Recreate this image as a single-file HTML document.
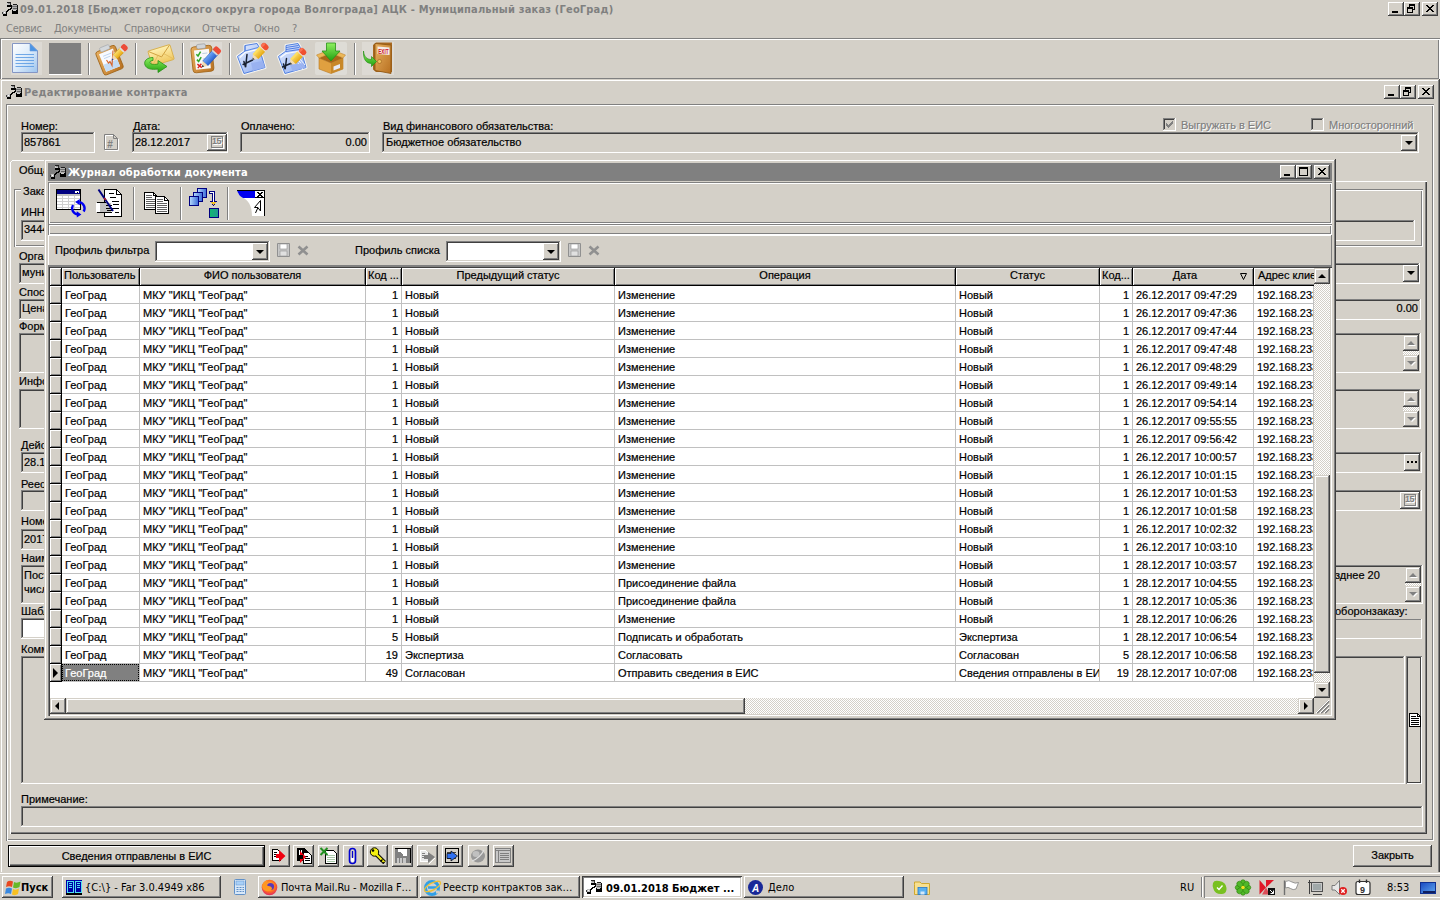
<!DOCTYPE html>
<html lang="ru"><head><meta charset="utf-8"><title>АЦК - Муниципальный заказ</title>
<style>
html,body{margin:0;padding:0}
body{width:1440px;height:900px;background:#D4D0C8;position:relative;overflow:hidden;font:11px "Liberation Sans",sans-serif;color:#000;line-height:13px;-webkit-text-stroke:.2px currentColor}
div,span,svg,i,b{position:absolute;box-sizing:border-box;white-space:nowrap}
b{font-weight:normal}
.t{font:bold 11px "DejaVu Sans Condensed","DejaVu Sans","Liberation Sans",sans-serif;color:#808080;line-height:13px}
.m{color:#808080;top:22px;font:11px "DejaVu Sans Condensed","DejaVu Sans","Liberation Sans",sans-serif;letter-spacing:-.2px;line-height:14px}
.raised{box-shadow:inset -1px -1px 0 #404040,inset 1px 1px 0 #fff,inset -2px -2px 0 #808080,inset 2px 2px 0 #D4D0C8;background:#D4D0C8}
.sunken{box-shadow:inset -1px -1px 0 #fff,inset 1px 1px 0 #808080,inset -2px -2px 0 #D4D0C8,inset 2px 2px 0 #404040}
.bev{box-shadow:inset -1px -1px 0 #fff,inset 1px 1px 0 #808080,inset -2px -2px 0 #808080,inset 2px 2px 0 #fff}
.groove{box-shadow:inset 1px 1px 0 #808080,inset -1px -1px 0 #fff,inset 2px 2px 0 #fff,inset -2px -2px 0 #808080}
.low1{box-shadow:inset -1px -1px 0 #fff,inset 1px 1px 0 #808080}
.hi1{box-shadow:inset -1px -1px 0 #808080,inset 1px 1px 0 #fff}
.win{box-shadow:inset -1px -1px 0 #404040,inset 1px 1px 0 #D4D0C8,inset -2px -2px 0 #808080,inset 2px 2px 0 #fff;background:#D4D0C8}
.wb{width:16px;height:14px}
.vs{width:2px;box-shadow:inset 1px 0 0 #808080,inset -1px 0 0 #fff}
.dis{color:#808080;text-shadow:1px 1px 0 #fff}
.t,.m,.tb,.cal,svg text{-webkit-text-stroke:0}
.sb{box-shadow:inset -1px -1px 0 #404040,inset 1px 1px 0 #D4D0C8,inset -2px -2px 0 #808080,inset 2px 2px 0 #fff}
.au,.ad,.al,.ar{width:0;height:0;border:4px solid transparent}
.au{left:4px;top:2px;border-bottom-color:#000;border-top-width:0;margin-top:4px}
.ad{left:4px;top:6px;border-top-color:#000;border-bottom-width:0}
.al{left:1px;top:4px;border-right-color:#000;border-left-width:0;margin-left:4px}
.ar{left:6px;top:4px;border-left-color:#000;border-right-width:0}
.au.dg{border-bottom-color:#808080;filter:drop-shadow(1px 1px 0 #fff)}
.ad.dg{border-top-color:#808080;filter:drop-shadow(1px 1px 0 #fff)}
.cal{left:4px;top:2px;width:12px;height:12px;font:bold 9px "Liberation Sans",sans-serif;line-height:11px;text-align:left;padding-left:1px;color:#808080;text-shadow:1px 1px 0 #fff;letter-spacing:-.6px;overflow:hidden;box-shadow:inset 1px 1px 0 #808080,inset -1px -1px 0 #808080,1px 1px 0 #fff}
/* grid */
.c{height:17px;line-height:18px;padding:0 3px;overflow:hidden;background:#fff}
.c.r{text-align:right}
.c.sel{background:#808080;color:#fff;outline:1px dotted #000;outline-offset:-1px}
.ind{left:50px;width:11px;height:17px;background:#D4D0C8;box-shadow:inset 1px 1px 0 #fff,inset -1px -1px 0 #808080}
.ind i{left:3px;top:4px;border-left:5px solid #000;border-top:5px solid transparent;border-bottom:5px solid transparent;width:0;height:0}
.h{top:268px;height:17px;line-height:15px;text-align:center;overflow:hidden;background:#D4D0C8;box-shadow:inset 1px 1px 0 #fff,inset -1px -1px 0 #808080}
.chk{background:repeating-conic-gradient(#fff 0 25%,#D4D0C8 0 50%) 0 0/2px 2px}
</style></head><body>

<!-- main title bar -->
<div class="t" style="left:20px;top:3px;letter-spacing:.18px">09.01.2018 [Бюджет городского округа города Волгограда] АЦК - Муниципальный заказ (ГеоГрад)</div>
<svg width="0" height="0" style="left:0;top:0"><defs>
<symbol id="app" viewBox="0 0 20 18">
<g shape-rendering="crispEdges">
<rect x="7" y="2" width="4" height="1" fill="#202020"/><rect x="7" y="3" width="4" height="2" fill="#C8C8C8"/><rect x="8" y="3" width="2" height="1" fill="#909090"/><rect x="7" y="5" width="5" height="2" fill="#000"/><rect x="10" y="3" width="1" height="2" fill="#303030"/>
<rect x="13" y="4" width="4" height="1" fill="#202020"/><rect x="12" y="5" width="6" height="5" fill="#B0B0B0"/><rect x="12" y="6" width="5" height="1" fill="#707070"/><rect x="13" y="8" width="4" height="1" fill="#606060"/><rect x="17" y="5" width="1" height="9" fill="#101010"/>
<rect x="12" y="10" width="6" height="4" fill="#000"/><rect x="13" y="10" width="3" height="1" fill="#D0D0D0"/>
<rect x="11" y="6" width="1" height="2" fill="#000"/>
<rect x="10" y="8" width="2" height="1" fill="#000"/><rect x="8" y="9" width="3" height="1" fill="#000"/><rect x="7" y="10" width="2" height="1" fill="#000"/><rect x="6" y="11" width="2" height="1" fill="#000"/>
<rect x="3" y="11" width="3" height="3" fill="#C0C0C0"/><rect x="2" y="12" width="1" height="2" fill="#404040"/><rect x="4" y="12" width="1" height="1" fill="#fff"/><rect x="6" y="12" width="1" height="3" fill="#000"/><rect x="3" y="14" width="4" height="2" fill="#000"/>
</g>
</symbol>
</defs></svg>
<svg style="left:0;top:0" width="20" height="18"><use href="#app"/></svg>

<div class="raised wb" style="left:1388px;top:2px"><svg width="16" height="14" shape-rendering="crispEdges"><rect x="4" y="9" width="6" height="2"/></svg></div>
<div class="raised wb" style="left:1404px;top:2px"><svg width="16" height="14" shape-rendering="crispEdges"><path d="M5 2h6v2h-6zM5 4h1v1h-1zM10 4h1v4h-1zM9 7h1v1h-1zM3 5h6v2h-6zM3 7h1v4h-1zM8 7h1v4h-1zM3 10h6v1h-6z"/></svg></div>
<div class="raised wb" style="left:1422px;top:2px"><svg width="16" height="14" shape-rendering="crispEdges"><path d="M4 3h2v1h-2zM10 3h2v1h-2zM5 4h2v1h-2zM9 4h2v1h-2zM6 5h4v1h-4zM7 6h2v1h-2zM6 7h4v1h-4zM5 8h2v1h-2zM9 8h2v1h-2zM4 9h2v1h-2zM10 9h2v1h-2z"/></svg></div>

<!-- menu -->
<div class="m" style="left:6px">Сервис</div>
<div class="m" style="left:54px">Документы</div>
<div class="m" style="left:124px">Справочники</div>
<div class="m" style="left:202px">Отчеты</div>
<div class="m" style="left:254px">Окно</div>
<div class="m" style="left:292px">?</div>

<!-- toolbar -->
<div class="groove" style="left:0;top:38px;width:1440px;height:42px"></div>
<svg style="left:0;top:40px" width="400" height="38" viewBox="0 40 400 38">
<defs>
<linearGradient id="gPage" x1="0" y1="0" x2="1" y2="1"><stop offset="0" stop-color="#fff"/><stop offset=".5" stop-color="#DCEBFA"/><stop offset="1" stop-color="#9CC4EE"/></linearGradient>
<linearGradient id="gPencilY" x1="0" y1="0" x2="0" y2="1"><stop offset="0" stop-color="#FBE070"/><stop offset="1" stop-color="#E8A810"/></linearGradient>
<linearGradient id="gPencilB" x1="0" y1="0" x2="0" y2="1"><stop offset="0" stop-color="#70A8F8"/><stop offset="1" stop-color="#2860D0"/></linearGradient>
<linearGradient id="gGreen" x1="0" y1="0" x2="0" y2="1"><stop offset="0" stop-color="#90F060"/><stop offset="1" stop-color="#20A010"/></linearGradient>
<linearGradient id="gBrown" x1="0" y1="0" x2="1" y2="1"><stop offset="0" stop-color="#E8B060"/><stop offset="1" stop-color="#B87020"/></linearGradient>
<linearGradient id="gEnv" x1="0" y1="0" x2="0" y2="1"><stop offset="0" stop-color="#FFF0B0"/><stop offset="1" stop-color="#F0C860"/></linearGradient>
<linearGradient id="gBluePaper" x1="0" y1="0" x2="1" y2="1"><stop offset="0" stop-color="#E8F0FF"/><stop offset="1" stop-color="#88A8F0"/></linearGradient>
</defs>
<!-- separators -->
<g shape-rendering="crispEdges">
<path d="M88.5 43V75M135.5 43V75M182.5 43V75M229.5 43V75M354.5 43V75" stroke="#808080"/>
<path d="M89.5 43V75M136.5 43V75M183.5 43V75M230.5 43V75M355.5 43V75" stroke="#fff"/>
</g>
<!-- 1 new doc -->
<g transform="translate(10,42)">
<rect x="1" y="0" width="31" height="33" fill="#DDDAD4"/>
<path d="M2.5 1.5H20L27.5 9V30.5H2.5Z" fill="url(#gPage)" stroke="#8496C4"/>
<path d="M20 1.5V9H27.5Z" fill="#4A94E4" stroke="#6C9CDC" stroke-width=".6"/>
<path d="M5.5 12.5H24M5.5 15.5H24M5.5 18.5H24M5.5 21.5H24M5.5 24.5H24" stroke="#5C9CE4" stroke-width="1" opacity=".85"/>
</g>
<!-- 2 gray -->
<rect x="49" y="43" width="32" height="31" fill="#808080"/><rect x="49" y="74" width="33" height="1" fill="#fff"/>
<!-- 3 clipboard + pencil -->
<g transform="translate(96,42)">
<g transform="rotate(-22 14 18)">
<rect x="3" y="5.500" width="21" height="25" rx="2.500" fill="url(#gBrown)" stroke="#A06418" stroke-width=".8"/>
<rect x="6" y="8.500" width="15" height="19" fill="#F8FAFF"/>
<rect x="6" y="20" width="15" height="7.500" fill="#C4DCF4"/>
<rect x="8.500" y="3" width="10" height="4.500" rx="1.200" fill="#D4D8DC" stroke="#A0A4A8" stroke-width=".6"/>
<path d="M9 12H18M9 14.500H16" stroke="#B8D0EC" stroke-width=".8"/>
</g>
<path d="M10.500 18L12.500 21L14 19.500L16 23.500L17 8.500" fill="none" stroke="#D86830" stroke-width="1.200"/>
<g transform="translate(2,-2) rotate(-45 22 12)">
<rect x="15" y="9" width="10" height="6" fill="url(#gPencilY)" stroke="#C08808" stroke-width=".5"/>
<path d="M15 9L10.500 12L15 15Z" fill="#F0D8B0"/><path d="M12 11L10 12L12 13Z" fill="#2840A0"/>
<rect x="25" y="8.600" width="6" height="6.800" rx="2.400" fill="#EC4C38"/>
<rect x="24" y="9" width="1.600" height="6" fill="#E0E0E0"/>
</g>
</g>
<!-- 4 envelope + green arrow -->
<g transform="translate(143,42)">
<g transform="rotate(-17 18 13)">
<rect x="6.5" y="5.500" width="23" height="15.500" rx="1" fill="url(#gEnv)" stroke="#D8B050" stroke-width=".9"/>
<path d="M7 6L18 15L29 6" fill="none" stroke="#D0A040" stroke-width=".9"/>
<path d="M7 20.500L15 12.500M29 20.500L21 12.500" stroke="#E0B858" stroke-width=".7"/>
</g>
<path d="M10 15.500C4 15.500 0.500 19 2 23C3.500 27 9 28 15 27V30.500L24 24.500L15 18.500V22C10 23 7 22 7 20.500C7 19 8.500 18.500 10 18.500Z" fill="url(#gGreen)" stroke="#289018" stroke-width=".8"/>
</g>
<!-- 5 clipboard checklist + blue pencil -->
<g transform="translate(190,42)">
<rect x="0" y="0" width="32" height="33" fill="#DDDAD4"/>
<g transform="rotate(-6 13 18)">
<rect x="2" y="4" width="21" height="26" rx="3" fill="url(#gBrown)" stroke="#A06418" stroke-width=".8"/>
<rect x="5" y="7.500" width="15" height="19.500" fill="#F8F8F8"/>
<rect x="8" y="2" width="9" height="4.500" rx="1.500" fill="#D0D4D8" stroke="#909498" stroke-width=".6"/>
<path d="M7 11.500L8.500 13.500L11.500 9.500M7 17L8.500 19L11.500 15" fill="none" stroke="#30A828" stroke-width="1.500"/>
<path d="M7 21.500L11 25.500M11 21.500L7 25.500" stroke="#D82020" stroke-width="1.400"/>
<path d="M13 11.500H18M13 17H18" stroke="#B0C4DC" stroke-width=".8"/>
</g>
<g transform="rotate(-48 22 14)">
<rect x="12" y="10.500" width="15" height="7" fill="url(#gPencilB)" stroke="#2050B0" stroke-width=".5"/>
<path d="M12 10.500L7 14L12 17.500Z" fill="#F0D8B0"/><path d="M9 12.800L7 14L9 15.200Z" fill="#303030"/>
<rect x="26.500" y="10" width="6" height="8" rx="2.200" fill="#EC4C38"/>
<rect x="25.500" y="10.500" width="1.600" height="7" fill="#D8D8D8"/>
</g>
</g>
<!-- 6 blue paper + pencil -->
<g transform="translate(237,42)">
<path d="M8 3.500L20 1.500L22 5L28 25.500L7 31.500L0.500 14.500L8 9Z" fill="none" stroke="#fff" stroke-width="3" opacity=".75" stroke-linejoin="round"/>
<path d="M8 3.500L20 1.500L22 5L28 25.500L7 31.500L0.500 14.500L8 9Z" fill="url(#gBluePaper)" stroke="#5080E0" stroke-width="1" stroke-linejoin="round"/>
<path d="M8 9L21 5.500M8 3.500V9" fill="none" stroke="#5080E0" stroke-width=".9"/>
<path d="M14 21L26 19L28 25.500L16 29Z" fill="#98B0F0" opacity=".9"/>
<path d="M3 15.500L8 10.500L20.500 7.500" fill="none" stroke="#fff" stroke-width="1.200" opacity=".9"/>
<path d="M10 12.500L8.600 25.200L6.900 19.500M6.100 22.500L15.600 18" fill="none" stroke="#182030" stroke-width="1.500" stroke-linecap="round"/>
<g transform="translate(15.5,17.8) rotate(-47)">
<path d="M0 0L4.500 -3.800V3.800Z" fill="#F4DCB0"/><path d="M0 0L1.800 -1.500V1.500Z" fill="#303848"/>
<rect x="4.500" y="-3.800" width="10" height="7.600" fill="url(#gPencilY)"/>
<rect x="4.500" y="-3.800" width="10" height="2.200" fill="#FFE060" opacity=".7"/>
<rect x="14.500" y="-3.800" width="1.300" height="7.600" fill="#F0E0D0"/>
<rect x="15.500" y="-4" width="5.500" height="8" rx="2.600" fill="#F05030"/>
<rect x="16" y="-3.600" width="4.500" height="2.500" rx="1.200" fill="#FF8060" opacity=".7"/>
</g>
</g>
<!-- 7 blue papers stack + pencil -->
<g transform="translate(276,42)">
<path d="M10 3.500L22 1.500L24 5L30 25.500L9 31.500L2.500 14.500L10 9Z" fill="none" stroke="#fff" stroke-width="3" opacity=".75" stroke-linejoin="round"/>
<path d="M10 3.500L22 1.500L24 5L30 25.500L9 31.500L2.500 14.500L10 9Z" fill="url(#gBluePaper)" stroke="#5080E0" stroke-width="1" stroke-linejoin="round"/>
<path d="M10 5.500L22.500 3.500M10 7.500L23 5.500M10 9.500L23.500 7.500" fill="none" stroke="#4070E0" stroke-width=".9"/>
<path d="M24 17L29 23M23 19L28 25M22 21L27 27" fill="none" stroke="#fff" stroke-width="1" opacity=".9"/>
<path d="M14 23L27 21L30 25.500L17 29.500Z" fill="#98B0F0" opacity=".9"/>
<path d="M4.500 15.500L10 11.500L22 9.500" fill="none" stroke="#fff" stroke-width="1.200" opacity=".9"/>
<path d="M10.500 16.500L9.200 27.200L7.500 22M6.500 25L14.500 21.500" fill="none" stroke="#182030" stroke-width="1.500" stroke-linecap="round"/>
<g transform="translate(14,22.6) rotate(-46)">
<path d="M0 0L4.500 -3.800V3.800Z" fill="#F4DCB0"/><path d="M0 0L1.800 -1.500V1.500Z" fill="#303848"/>
<rect x="4.500" y="-3.800" width="10" height="7.600" fill="url(#gPencilY)"/>
<rect x="4.500" y="-3.800" width="10" height="2.200" fill="#FFE060" opacity=".7"/>
<rect x="14.500" y="-3.800" width="1.300" height="7.600" fill="#F0E0D0"/>
<rect x="15.500" y="-4" width="5.500" height="8" rx="2.600" fill="#F05030"/>
<rect x="16" y="-3.600" width="4.500" height="2.500" rx="1.200" fill="#FF8060" opacity=".7"/>
</g>
</g>
<!-- 8 box + green arrow -->
<g transform="translate(315,42)">
<rect x="0" y="0" width="32" height="33" rx="2" fill="#DEDCD6"/>
<path d="M4 16L16 21L28 16V27L16 31.500L4 27Z" fill="#E0A040" stroke="#B87820" stroke-width=".6"/>
<path d="M16 21V31.500L28 27V16Z" fill="#C88828"/>
<path d="M4 16L16 11L28 16L16 21Z" fill="#A86818"/>
<path d="M4 16L1.500 13L13 8.500L16 11ZM28 16L30.500 13L19 8.500L16 11Z" fill="#ECB858" stroke="#B87820" stroke-width=".5"/>
<path d="M18.500 24.500L25 22V26L18.500 28.500Z" fill="#E8ECF4"/>
<path d="M11.500 1H20.500V9H25L16 19L7 9H11.500Z" fill="url(#gGreen)" stroke="#289018" stroke-width=".8"/>
</g>
<!-- 9 exit door -->
<g transform="translate(362,42)">
<rect x="0" y="0" width="32" height="33" fill="#DDDAD4"/>
<path d="M11 3L14 0.500H30V30H14L11 27.500Z" fill="#A86820"/>
<path d="M13 1.500L29 3V31.500L13 28.500Z" fill="url(#gBrown)" stroke="#8C5410" stroke-width=".8"/>
<rect x="15.500" y="5" width="12" height="7.500" fill="#F4ECEC" transform="skewY(4) translate(0,-1.500)"/>
<text x="16.200" y="12" font-family="Liberation Sans,sans-serif" font-size="6.500" font-weight="bold" fill="#D01820" textLength="10.500" lengthAdjust="spacingAndGlyphs">EXIT</text>
<circle cx="17.500" cy="19.500" r="2" fill="#F0C060" stroke="#8C5410" stroke-width=".5"/>
<path d="M1.500 9C2 15 5 17.500 9.500 17.500V14.500L14.500 19.500L9.500 24.500V21.500C4 21.500 1 17 1.500 9Z" fill="url(#gGreen)" stroke="#289018" stroke-width=".7"/>
</g>
</svg>


<!-- child window -->
<div class="win" style="left:0;top:79px;width:1440px;height:830px"></div>
<svg style="left:4px;top:83px" width="20" height="18"><use href="#app"/></svg>
<div class="t" style="left:24px;top:86px;letter-spacing:.25px">Редактирование контракта</div>
<div class="raised wb" style="left:1384px;top:85px"><svg width="16" height="14" shape-rendering="crispEdges"><rect x="4" y="9" width="6" height="2"/></svg></div>
<div class="raised wb" style="left:1400px;top:85px"><svg width="16" height="14" shape-rendering="crispEdges"><path d="M5 2h6v2h-6zM5 4h1v1h-1zM10 4h1v4h-1zM9 7h1v1h-1zM3 5h6v2h-6zM3 7h1v4h-1zM8 7h1v4h-1zM3 10h6v1h-6z"/></svg></div>
<div class="raised wb" style="left:1418px;top:85px"><svg width="16" height="14" shape-rendering="crispEdges"><path d="M4 3h2v1h-2zM10 3h2v1h-2zM5 4h2v1h-2zM9 4h2v1h-2zM6 5h4v1h-4zM7 6h2v1h-2zM6 7h4v1h-4zM5 8h2v1h-2zM9 8h2v1h-2zM4 9h2v1h-2zM10 9h2v1h-2z"/></svg></div>
<div class="groove" style="left:6px;top:104px;width:1428px;height:737px"></div>

<!-- top row -->
<div style="left:21px;top:120px">Номер:</div>
<div class="sunken" style="left:21px;top:132px;width:74px;height:21px"></div><div style="left:24px;top:136px">857861</div>
<svg style="left:104px;top:134px" width="15" height="17" viewBox="0 0 15 17"><path d="M0.500 0.500H9.500L13.500 4.500V15.500H0.500Z" fill="#D4D0C8" stroke="#808080"/><path d="M9.500 0.500V4.500H13.500" fill="none" stroke="#808080"/><path d="M1.500 15V1.500H9M14.500 5V16.500H1" fill="none" stroke="#fff"/><text x="3.200" y="13.500" font-family="Liberation Sans,sans-serif" font-size="10" font-weight="bold" fill="#808080">#</text></svg>
<div style="left:133px;top:120px">Дата:</div>
<div class="sunken" style="left:132px;top:132px;width:96px;height:21px"></div><div style="left:135px;top:136px">28.12.2017</div>
<div class="raised" style="left:207px;top:134px;width:20px;height:17px"><div class="cal">15</div></div>
<div style="left:241px;top:120px">Оплачено:</div>
<div class="sunken" style="left:240px;top:132px;width:130px;height:21px"></div><div style="left:300px;top:136px;width:67px;text-align:right">0.00</div>
<div style="left:383px;top:120px">Вид финансового обязательства:</div>
<div class="sunken" style="left:382px;top:132px;width:1037px;height:21px"></div><div style="left:386px;top:136px">Бюджетное обязательство</div>
<div class="raised" style="left:1401px;top:135px;width:16px;height:16px"><i class="ad" style="left:4px;top:6px"></i></div>
<div class="sunken" style="left:1163px;top:118px;width:13px;height:13px"></div>
<svg style="left:1166px;top:121px" width="7" height="7" viewBox="0 0 7 7" shape-rendering="crispEdges"><path d="M0 2h1v3h-1zM1 3h1v3h-1zM2 4h1v3h-1zM3 3h1v3h-1zM4 2h1v3h-1zM5 1h1v3h-1zM6 0h1v3h-1z" fill="#808080"/></svg>
<div class="dis" style="left:1181px;top:119px">Выгружать в ЕИС</div>
<div class="sunken" style="left:1311px;top:118px;width:13px;height:13px"></div>
<div class="dis" style="left:1329px;top:119px">Многосторонний</div>

<!-- tab + page -->
<div style="left:10px;top:181px;width:1417px;height:653px;box-shadow:inset 1px 1px 0 #fff,inset -1px -1px 0 #404040,inset -2px -2px 0 #808080"></div>
<div style="left:10px;top:160px;width:120px;height:23px;background:#D4D0C8;box-shadow:inset 1px 0 0 #fff,inset 0 1px 0 #fff,inset -1px 0 0 #404040,inset -2px 0 0 #808080"></div>
<div style="left:10px;top:160px;width:2px;height:2px;background:#D4D0C8"></div><div style="left:11px;top:161px;width:1px;height:1px;background:#fff"></div>
<div style="left:19px;top:164px">Общая информация</div>
<!-- groupbox -->
<div style="left:14px;top:189px;width:1409px;height:58px;box-shadow:inset 1px 1px 0 #808080,inset -1px -1px 0 #fff,inset 2px 2px 0 #fff,inset -2px -2px 0 #808080"></div>
<div style="left:21px;top:185px;padding:0 2px;background:#D4D0C8">Заказчик</div>
<div style="left:21px;top:206px">ИНН</div>
<div class="sunken" style="left:21px;top:220px;width:1394px;height:21px"></div><div style="left:24px;top:223px">3444</div>
<div style="left:19px;top:250px">Организация</div>
<div class="sunken" style="left:19px;top:263px;width:1401px;height:21px"></div><div style="left:22px;top:266px">муниципальное</div>
<div class="raised" style="left:1403px;top:265px;width:16px;height:17px"><i class="ad" style="left:4px;top:6px"></i></div>
<div style="left:19px;top:286px">Способ</div>
<div class="sunken" style="left:19px;top:299px;width:1402px;height:21px"></div><div style="left:22px;top:302px">Цена</div><div style="left:1350px;top:302px;width:68px;text-align:right">0.00</div>
<div style="left:19px;top:320px">Формула</div>
<div class="sunken" style="left:19px;top:333px;width:1402px;height:40px"></div>
<div style="left:19px;top:375px">Информация</div>
<div class="sunken" style="left:19px;top:389px;width:1402px;height:40px"></div>
<div style="left:21px;top:439px">Действует</div>
<div class="sunken" style="left:21px;top:452px;width:1401px;height:21px"></div><div style="left:24px;top:456px">28.12.2017</div>
<div style="left:21px;top:478px">Реестровый</div>
<div class="sunken" style="left:21px;top:490px;width:1401px;height:21px"></div>
<div style="left:21px;top:515px">Номер</div>
<div class="sunken" style="left:21px;top:529px;width:700px;height:21px"></div><div style="left:24px;top:533px">2017</div>
<div style="left:21px;top:552px">Наименование</div>
<div class="sunken" style="left:21px;top:565px;width:1402px;height:39px"></div><div style="left:24px;top:569px">Поставка</div><div style="left:24px;top:583px">числе</div>
<div style="left:1335px;top:569px">зднее 20</div>
<div style="left:21px;top:605px">Шаблон</div><div style="left:1335px;top:605px">оборонзаказу:</div>
<div class="sunken" style="left:21px;top:618px;width:680px;height:21px;background:#fff"></div>
<div class="low1" style="left:720px;top:619px;width:702px;height:20px"></div>
<div style="left:21px;top:643px">Комментарий</div>
<div class="sunken" style="left:21px;top:656px;width:1384px;height:128px"></div>
<div style="left:1406px;top:656px;width:16px;height:128px;box-shadow:inset 1px 1px 0 #808080,inset -1px -1px 0 #fff,inset 2px 2px 0 #404040,inset -2px -2px 0 #404040"></div>
<div style="left:21px;top:793px">Примечание:</div>
<div class="sunken" style="left:21px;top:806px;width:1402px;height:21px"></div>

<!-- memo scroll buttons -->
<div class="raised sb" style="left:1403px;top:335px;width:16px;height:16px"><i class="au dg"></i></div><div class="chk" style="left:1403px;top:351px;width:16px;height:4px"></div><div class="raised sb" style="left:1403px;top:355px;width:16px;height:16px"><i class="ad dg"></i></div>
<div class="raised sb" style="left:1403px;top:391px;width:16px;height:16px"><i class="au dg"></i></div><div class="chk" style="left:1403px;top:407px;width:16px;height:4px"></div><div class="raised sb" style="left:1403px;top:411px;width:16px;height:16px"><i class="ad dg"></i></div>
<div class="raised sb" style="left:1405px;top:567px;width:16px;height:16px"><i class="au dg"></i></div><div class="chk" style="left:1405px;top:583px;width:16px;height:3px"></div><div class="raised sb" style="left:1405px;top:586px;width:16px;height:16px"><i class="ad dg"></i></div>
<div class="raised" style="left:1400px;top:492px;width:20px;height:17px"><div class="cal">15</div></div>
<div class="raised" style="left:1404px;top:454px;width:16px;height:17px"><svg width="16" height="17" shape-rendering="crispEdges"><path d="M3 7h2v2h-2zM7 7h2v2h-2zM11 7h2v2h-2z"/></svg></div>
<svg style="left:1409px;top:713px" width="12" height="14" viewBox="0 0 12 14" shape-rendering="crispEdges"><path d="M0.500 0.500H8.500L11.500 3.500V13.500H0.500Z" fill="#fff" stroke="#000"/><path d="M8.500 0.500V3.500H11.500" fill="none" stroke="#000"/><path d="M2 3.500H7M2 5.500H10M2 7.500H10M2 9.500H10M2 11.500H10" stroke="#000"/></svg>
<!-- status row -->
<div style="left:8px;top:845px;width:257px;height:22px;border:1px solid #000;box-shadow:inset 1px 1px 0 #fff,inset -1px -1px 0 #404040,inset -2px -2px 0 #808080;text-align:center;line-height:20px">Сведения отправлены в ЕИС</div>
<div class="raised" style="left:1353px;top:845px;width:79px;height:22px;text-align:center;line-height:21px">Закрыть</div>


<svg style="left:266px;top:843px" width="252" height="26" viewBox="266 843 252 26">
<g shape-rendering="crispEdges">
<g id="sbtn"><rect x="269" y="845" width="21" height="22" fill="#D4D0C8"/><path d="M269.500 866V845.500H289" stroke="#fff" fill="none"/><path d="M269 866.500H289.500V845" stroke="#404040" fill="none"/><path d="M270 865.500H288.500V846" stroke="#808080" fill="none"/></g>
<use href="#sbtn" x="24"/><use href="#sbtn" x="49"/><use href="#sbtn" x="74"/><use href="#sbtn" x="98"/><use href="#sbtn" x="123"/><use href="#sbtn" x="148"/><use href="#sbtn" x="173"/><use href="#sbtn" x="199"/><use href="#sbtn" x="224"/>
<!-- 1 doc + red arrow -->
<path d="M272.500 849.500H277.500L280.500 852.500V860.500H272.500Z" fill="#fff" stroke="#000"/><path d="M274 852.500H277M274 854.500H279M274 856.500H279" stroke="#000"/>
<!-- 2 docs + red arrow -->
<path d="M297.500 848.500H304.500L307.500 851.500V860.500H297.500Z" fill="#000" stroke="#000"/><path d="M299.500 850V855M301.500 850V853" stroke="#fff"/>
<path d="M303.500 852.500H308.500L311.500 855.500V863.500H303.500Z" fill="#fff" stroke="#000"/><path d="M305 856.500H308M305 858.500H310M305 860.500H310" stroke="#000"/>
<!-- 3 excel doc -->
<path d="M325.500 850.500H333.500L336.500 853.500V863.500H325.500Z" fill="#fff" stroke="#000"/><path d="M327 855.500H335M327 857.500H335M327 859.500H335M327 861.500H335" stroke="#A8C8A8"/>
<!-- 6 save -->
<rect x="395" y="848" width="15" height="15" fill="#808080"/><path d="M395 848H410V863" fill="none" stroke="#000"/><rect x="398" y="849" width="9" height="7" fill="#fff"/><rect x="397" y="858" width="9" height="5" fill="#C8C8C8"/><path d="M399.500 858V863M402.500 858V863" stroke="#808080"/><path d="M395 852H400L403 855L400 858H395Z" fill="#808080"/>
<!-- 7 doc gray arrow -->
<path d="M420.500 850.500H425.500L428.500 853.500V861.500H420.500Z" fill="#E8E8E8" stroke="#fff"/><path d="M422 853.500H425M422 855.500H427M422 857.500H427" stroke="#808080"/>
<!-- 8 doc blue arrow -->
<rect x="445.500" y="848.500" width="13" height="14" fill="#D4D0C8" stroke="#000"/><path d="M447 852.500H456M447 855.500H456M447 858.500H456" stroke="#404040"/>
<!-- 10 list -->
<rect x="495.500" y="848.500" width="15" height="14" fill="#C8C8C8" stroke="#808080"/><path d="M496 850.500H510M498.500 851V862M500 853.500H509M500 855.500H509M500 857.500H509M500 859.500H509" stroke="#808080"/>
</g>
<path d="M279 853V857H276V861H279V865L285.500 859Z" fill="#F00010" transform="translate(0,-3)"/>
<path d="M303 853V857H300V861H303V865L297 859Z" fill="#F00010" transform="translate(603,-2) scale(-1,1)"/>
<path d="M320.500 848L327.500 855M327.500 848L320.500 855" stroke="#209020" stroke-width="2"/>
<rect x="349.500" y="848.500" width="6" height="15" rx="3" fill="none" stroke="#0000D0" stroke-width="1.600"/><rect x="351" y="857" width="3" height="5" rx="1.500" fill="#fff"/><path d="M352.500 851V858" stroke="#0000D0" stroke-width="1.200"/>
<g transform="translate(367,845)"><path d="M9.500 9.500L17.500 17.500" stroke="#000" stroke-width="4"/><circle cx="7.500" cy="7" r="4.200" fill="#F4F010" stroke="#000" stroke-width="1"/><path d="M9.500 9.500L17.500 17.500" stroke="#F4F010" stroke-width="2.200"/><path d="M13.500 16.500L15.500 14.500M16 18.500L17.500 17" stroke="#000" stroke-width="1.200"/><circle cx="6" cy="5.500" r="1.300" fill="#000"/></g>
<path d="M428 853V856H424V860H428V864L435 858Z" fill="#808080" transform="translate(0,-1)"/><path d="M429 864L435 858" stroke="#fff" stroke-width="1"/>
<path d="M451 851V853.500H447V858.500H451V861L457.500 856Z" fill="#3070F0" stroke="#000" stroke-width=".7"/>
<ellipse cx="478" cy="856" rx="7" ry="6.500" fill="#989898"/><ellipse cx="476" cy="854" rx="3.500" ry="3" fill="#C0C0C0"/><path d="M472 861Q480 858 484 850" stroke="#E0E0E0" stroke-width="1.200" fill="none"/>
</svg>

<!-- dialog -->
<div class="win" style="left:44px;top:159px;width:1292px;height:561px"></div>
<div style="left:48px;top:163px;width:1284px;height:18px;background:#808080"></div>
<svg style="left:48px;top:163px" width="20" height="18"><use href="#app"/></svg>
<div class="t" style="left:68px;top:166px;color:#fff;letter-spacing:.15px">Журнал обработки документа</div>
<div class="raised wb" style="left:1280px;top:165px"><svg width="16" height="14" shape-rendering="crispEdges"><rect x="4" y="9" width="6" height="2"/></svg></div>
<div class="raised wb" style="left:1296px;top:165px"><svg width="16" height="14" shape-rendering="crispEdges"><path d="M3 2h9v2h-9zM3 4h1v7h-1zM11 4h1v7h-1zM3 10h9v1h-9z"/></svg></div>
<div class="raised wb" style="left:1314px;top:165px"><svg width="16" height="14" shape-rendering="crispEdges"><path d="M4 3h2v1h-2zM10 3h2v1h-2zM5 4h2v1h-2zM9 4h2v1h-2zM6 5h4v1h-4zM7 6h2v1h-2zM6 7h4v1h-4zM5 8h2v1h-2zM9 8h2v1h-2zM4 9h2v1h-2zM10 9h2v1h-2z"/></svg></div>

<div class="groove" style="left:48px;top:182px;width:1284px;height:42px"></div>
<div class="groove" style="left:48px;top:224px;width:1284px;height:11px"></div>
<div class="hi1" style="left:48px;top:235px;width:1284px;height:31px"></div>
<div style="left:55px;top:244px">Профиль фильтра</div>
<div class="sunken" style="left:155px;top:241px;width:115px;height:21px;background:#fff"></div>
<div style="left:355px;top:244px">Профиль списка</div>
<div class="sunken" style="left:446px;top:241px;width:115px;height:21px;background:#fff"></div>

<svg style="left:50px;top:184px" width="230" height="38" viewBox="50 184 230 38">
<defs>
<linearGradient id="gSq" x1="0" y1="0" x2="1" y2="0"><stop offset="0" stop-color="#B8DCFC"/><stop offset="1" stop-color="#3868D8"/></linearGradient>
<linearGradient id="gSqG" x1="0" y1="0" x2="1" y2="0"><stop offset="0" stop-color="#10B870"/><stop offset="1" stop-color="#209890"/></linearGradient>
</defs>
<g shape-rendering="crispEdges">
<path d="M133.500 187V220M180.500 187V220M227.500 187V220" stroke="#808080"/>
<path d="M134.500 187V220M181.500 187V220M228.500 187V220" stroke="#fff"/>
<!-- 1 table -->
<rect x="56" y="189" width="24" height="20" fill="#fff" stroke="#000" stroke-width="1" transform="translate(.5,.5)"/>
<rect x="57" y="190" width="23" height="4" fill="#000080"/><rect x="75" y="191" width="4" height="2" fill="#fff"/><rect x="76.500" y="191.500" width="1" height="1" fill="#000"/>
<rect x="57" y="194" width="23" height="2" fill="#C0C0C0"/>
<path d="M57 198.500H80M57 201.500H80M57 204.500H80M57 207.500H80M62.500 196V209M68.500 196V209M74.500 196V209" stroke="#D0D0D0"/>
</g>
<!-- refresh arrows -->
<g fill="none" stroke="#0000F0" stroke-width="2.400">
<path d="M79.400 202.100A6.200 6.200 0 0 1 83.600 211.500"/><path d="M77.200 214.300A6.200 6.200 0 0 1 73 205"/>
</g>
<path d="M75.200 202.100L79.800 199V205.200ZM81.400 214.400L76.800 211.300V217.500Z" fill="#0000F0"/>
<!-- 2 doc with hand -->
<g shape-rendering="crispEdges">
<path d="M104.500 189.500H116.500L121.500 194.500V216.500H104.500Z" fill="#fff" stroke="#000"/>
<path d="M116.500 189.500V194.500H121.500" fill="none" stroke="#000"/>
<path d="M109 193.500H114M110 197.500H116M112 201.500H119M113 204.500H119M113 208.500H119M105 212.500H112M115 212.500H119" stroke="#000"/>
<rect x="100" y="203" width="11" height="9" fill="#C0C0C0"/>
<path d="M96.500 202.500H100M96.500 212.500H100" stroke="#000"/><rect x="96" y="203" width="4" height="9" fill="#fff"/>
<path d="M100 202.500H106M100 212.500H108M106 205.500H112M106 208.500H113M107 210.500H112" stroke="#000"/>
</g>
<path d="M98.500 189.500L113 211" stroke="#000080" stroke-width="2"/>
<path d="M104 198L106 200" stroke="#C02020" stroke-width="1.500"/>
<!-- 3 copy docs -->
<g shape-rendering="crispEdges">
<path d="M144.500 192.500H153.500L156.500 195.500V209.500H144.500Z" fill="#fff" stroke="#000"/>
<path d="M153.500 192.500V195.500H156.500" fill="none" stroke="#000"/>
<path d="M146 195.500H152M146 197.500H152M146 199.500H155M146 201.500H155M146 203.500H155M146 205.500H155M146 207.500H155" stroke="#606060"/>
<path d="M155.500 196.500H164.500L168.500 200.500V213.500H155.500Z" fill="#fff" stroke="#000"/>
<path d="M164.500 196.500V200.500H168.500" fill="none" stroke="#000"/>
<path d="M157 199.500H163M157 201.500H163M157 203.500H167M157 205.500H167M157 207.500H167M157 209.500H167M157 211.500H167" stroke="#606060"/>
<!-- 4 cascade -->
<rect x="197.500" y="188.500" width="9" height="9" fill="url(#gSq)" stroke="#000080"/>
<rect x="193.500" y="192.500" width="9" height="9" fill="url(#gSq)" stroke="#000080"/>
<rect x="189.500" y="196.500" width="9" height="9" fill="url(#gSq)" stroke="#000080"/>
<path d="M209.500 191.500H214.500V201.500H216.500L213.500 205L210.500 201.500H212.500V193.500H209.500Z" fill="#fff" stroke="#000080"/>
<path d="M211 202H216L213.500 205Z" fill="#F0C020"/>
<rect x="209.500" y="208.500" width="9" height="9" fill="url(#gSqG)" stroke="#000080"/>
</g>
<!-- 5 filter -->
<path d="M237 190H265V216H252C252 205 248 200 242 197Q238 194 237 190Z" fill="#fff"/>
<path d="M237 190H255V198H243Q238 195 237 190Z" fill="#0000F0"/>
<g shape-rendering="crispEdges"><path d="M237 190.500H265M264.500 190V216M255 197.500H265" stroke="#000"/>
<path d="M257 192h2v1h-2zM261 192h2v1h-2zM258 193h4v1h-4zM259 194h2v1h-2zM258 195h4v1h-4zM257 196h2v1h-2zM261 196h2v1h-2z" fill="#000"/></g>
<path d="M260.500 200.500L254.500 207.500H258L255.500 213M260.500 200.500V211L258.200 208" fill="none" stroke="#000" stroke-width="1"/>
</svg>
<!-- filter row widgets -->
<div class="raised" style="left:252px;top:243px;width:16px;height:17px"><i class="ad" style="left:4px;top:7px"></i></div>
<div class="raised" style="left:543px;top:243px;width:16px;height:17px"><i class="ad" style="left:4px;top:7px"></i></div>
<svg style="left:276px;top:242px" width="36" height="16" viewBox="0 0 36 16"><g id="fsave"><path d="M1.500 1.500H13.500V14.500H1.500Z" fill="#C8C8C8" stroke="#909090"/><rect x="4" y="2" width="7" height="5" fill="#fff" stroke="#909090" stroke-width=".6"/><rect x="4" y="9" width="7" height="5" fill="#E0E0E0" stroke="#909090" stroke-width=".6"/></g><path id="fx" d="M22.500 4.500L31.500 12.500M31.500 4.500L22.500 12.500" stroke="#909090" stroke-width="2.600"/></svg>
<svg style="left:567px;top:242px" width="36" height="16" viewBox="0 0 36 16"><use href="#fsave"/><use href="#fx"/></svg>

<!-- grid -->
<div style="left:48px;top:266px;width:1284px;height:450px;background:#fff;box-shadow:inset 1px 1px 0 #808080,inset 2px 2px 0 #404040,inset -1px -1px 0 #fff,inset -2px -2px 0 #D4D0C8"></div>
<div style="left:50px;top:268px;width:1264px;height:18px;background:#000"></div>
<div style="left:50px;top:286px;width:1264px;height:396px;background:#C0C0C0"></div>
<div style="left:50px;top:286px;width:12px;height:396px;background:#000"></div>
<div class="h" style="left:50px;width:11px"></div>
<div class="h" style="left:62px;width:77px;text-align:left;padding-left:2px">Пользователь</div>
<div class="h" style="left:140px;width:225px">ФИО пользователя</div>
<div class="h" style="left:366px;width:35px;text-align:left;padding-left:2px">Код ...</div>
<div class="h" style="left:402px;width:212px">Предыдущий статус</div>
<div class="h" style="left:615px;width:340px">Операция</div>
<div class="h" style="left:956px;width:143px">Статус</div>
<div class="h" style="left:1100px;width:32px;text-align:left;padding-left:2px">Код...</div>
<div class="h" style="left:1133px;width:120px;padding-right:16px">Дата</div>
<div class="h" style="left:1254px;width:75px;text-align:left;padding-left:4px">Адрес клиента</div>
<svg style="left:1240px;top:273px" width="7" height="7" viewBox="0 0 7 7"><path d="M0.5 0.5H6.5L3.5 6.5Z" fill="none" stroke="#000" stroke-width="1"/></svg>
<div class="ind" style="top:286px"></div>
<div class="c " style="left:62px;top:286px;width:77px">ГеоГрад</div>
<div class="c " style="left:140px;top:286px;width:225px">МКУ "ИКЦ "ГеоГрад"</div>
<div class="c r" style="left:366px;top:286px;width:35px">1</div>
<div class="c " style="left:402px;top:286px;width:212px">Новый</div>
<div class="c " style="left:615px;top:286px;width:340px">Изменение</div>
<div class="c " style="left:956px;top:286px;width:143px">Новый</div>
<div class="c r" style="left:1100px;top:286px;width:32px">1</div>
<div class="c " style="left:1133px;top:286px;width:120px">26.12.2017 09:47:29</div>
<div class="c " style="left:1254px;top:286px;width:59px">192.168.233.12</div>
<div class="ind" style="top:304px"></div>
<div class="c " style="left:62px;top:304px;width:77px">ГеоГрад</div>
<div class="c " style="left:140px;top:304px;width:225px">МКУ "ИКЦ "ГеоГрад"</div>
<div class="c r" style="left:366px;top:304px;width:35px">1</div>
<div class="c " style="left:402px;top:304px;width:212px">Новый</div>
<div class="c " style="left:615px;top:304px;width:340px">Изменение</div>
<div class="c " style="left:956px;top:304px;width:143px">Новый</div>
<div class="c r" style="left:1100px;top:304px;width:32px">1</div>
<div class="c " style="left:1133px;top:304px;width:120px">26.12.2017 09:47:36</div>
<div class="c " style="left:1254px;top:304px;width:59px">192.168.233.12</div>
<div class="ind" style="top:322px"></div>
<div class="c " style="left:62px;top:322px;width:77px">ГеоГрад</div>
<div class="c " style="left:140px;top:322px;width:225px">МКУ "ИКЦ "ГеоГрад"</div>
<div class="c r" style="left:366px;top:322px;width:35px">1</div>
<div class="c " style="left:402px;top:322px;width:212px">Новый</div>
<div class="c " style="left:615px;top:322px;width:340px">Изменение</div>
<div class="c " style="left:956px;top:322px;width:143px">Новый</div>
<div class="c r" style="left:1100px;top:322px;width:32px">1</div>
<div class="c " style="left:1133px;top:322px;width:120px">26.12.2017 09:47:44</div>
<div class="c " style="left:1254px;top:322px;width:59px">192.168.233.12</div>
<div class="ind" style="top:340px"></div>
<div class="c " style="left:62px;top:340px;width:77px">ГеоГрад</div>
<div class="c " style="left:140px;top:340px;width:225px">МКУ "ИКЦ "ГеоГрад"</div>
<div class="c r" style="left:366px;top:340px;width:35px">1</div>
<div class="c " style="left:402px;top:340px;width:212px">Новый</div>
<div class="c " style="left:615px;top:340px;width:340px">Изменение</div>
<div class="c " style="left:956px;top:340px;width:143px">Новый</div>
<div class="c r" style="left:1100px;top:340px;width:32px">1</div>
<div class="c " style="left:1133px;top:340px;width:120px">26.12.2017 09:47:48</div>
<div class="c " style="left:1254px;top:340px;width:59px">192.168.233.12</div>
<div class="ind" style="top:358px"></div>
<div class="c " style="left:62px;top:358px;width:77px">ГеоГрад</div>
<div class="c " style="left:140px;top:358px;width:225px">МКУ "ИКЦ "ГеоГрад"</div>
<div class="c r" style="left:366px;top:358px;width:35px">1</div>
<div class="c " style="left:402px;top:358px;width:212px">Новый</div>
<div class="c " style="left:615px;top:358px;width:340px">Изменение</div>
<div class="c " style="left:956px;top:358px;width:143px">Новый</div>
<div class="c r" style="left:1100px;top:358px;width:32px">1</div>
<div class="c " style="left:1133px;top:358px;width:120px">26.12.2017 09:48:29</div>
<div class="c " style="left:1254px;top:358px;width:59px">192.168.233.12</div>
<div class="ind" style="top:376px"></div>
<div class="c " style="left:62px;top:376px;width:77px">ГеоГрад</div>
<div class="c " style="left:140px;top:376px;width:225px">МКУ "ИКЦ "ГеоГрад"</div>
<div class="c r" style="left:366px;top:376px;width:35px">1</div>
<div class="c " style="left:402px;top:376px;width:212px">Новый</div>
<div class="c " style="left:615px;top:376px;width:340px">Изменение</div>
<div class="c " style="left:956px;top:376px;width:143px">Новый</div>
<div class="c r" style="left:1100px;top:376px;width:32px">1</div>
<div class="c " style="left:1133px;top:376px;width:120px">26.12.2017 09:49:14</div>
<div class="c " style="left:1254px;top:376px;width:59px">192.168.233.12</div>
<div class="ind" style="top:394px"></div>
<div class="c " style="left:62px;top:394px;width:77px">ГеоГрад</div>
<div class="c " style="left:140px;top:394px;width:225px">МКУ "ИКЦ "ГеоГрад"</div>
<div class="c r" style="left:366px;top:394px;width:35px">1</div>
<div class="c " style="left:402px;top:394px;width:212px">Новый</div>
<div class="c " style="left:615px;top:394px;width:340px">Изменение</div>
<div class="c " style="left:956px;top:394px;width:143px">Новый</div>
<div class="c r" style="left:1100px;top:394px;width:32px">1</div>
<div class="c " style="left:1133px;top:394px;width:120px">26.12.2017 09:54:14</div>
<div class="c " style="left:1254px;top:394px;width:59px">192.168.233.12</div>
<div class="ind" style="top:412px"></div>
<div class="c " style="left:62px;top:412px;width:77px">ГеоГрад</div>
<div class="c " style="left:140px;top:412px;width:225px">МКУ "ИКЦ "ГеоГрад"</div>
<div class="c r" style="left:366px;top:412px;width:35px">1</div>
<div class="c " style="left:402px;top:412px;width:212px">Новый</div>
<div class="c " style="left:615px;top:412px;width:340px">Изменение</div>
<div class="c " style="left:956px;top:412px;width:143px">Новый</div>
<div class="c r" style="left:1100px;top:412px;width:32px">1</div>
<div class="c " style="left:1133px;top:412px;width:120px">26.12.2017 09:55:55</div>
<div class="c " style="left:1254px;top:412px;width:59px">192.168.233.12</div>
<div class="ind" style="top:430px"></div>
<div class="c " style="left:62px;top:430px;width:77px">ГеоГрад</div>
<div class="c " style="left:140px;top:430px;width:225px">МКУ "ИКЦ "ГеоГрад"</div>
<div class="c r" style="left:366px;top:430px;width:35px">1</div>
<div class="c " style="left:402px;top:430px;width:212px">Новый</div>
<div class="c " style="left:615px;top:430px;width:340px">Изменение</div>
<div class="c " style="left:956px;top:430px;width:143px">Новый</div>
<div class="c r" style="left:1100px;top:430px;width:32px">1</div>
<div class="c " style="left:1133px;top:430px;width:120px">26.12.2017 09:56:42</div>
<div class="c " style="left:1254px;top:430px;width:59px">192.168.233.12</div>
<div class="ind" style="top:448px"></div>
<div class="c " style="left:62px;top:448px;width:77px">ГеоГрад</div>
<div class="c " style="left:140px;top:448px;width:225px">МКУ "ИКЦ "ГеоГрад"</div>
<div class="c r" style="left:366px;top:448px;width:35px">1</div>
<div class="c " style="left:402px;top:448px;width:212px">Новый</div>
<div class="c " style="left:615px;top:448px;width:340px">Изменение</div>
<div class="c " style="left:956px;top:448px;width:143px">Новый</div>
<div class="c r" style="left:1100px;top:448px;width:32px">1</div>
<div class="c " style="left:1133px;top:448px;width:120px">26.12.2017 10:00:57</div>
<div class="c " style="left:1254px;top:448px;width:59px">192.168.233.12</div>
<div class="ind" style="top:466px"></div>
<div class="c " style="left:62px;top:466px;width:77px">ГеоГрад</div>
<div class="c " style="left:140px;top:466px;width:225px">МКУ "ИКЦ "ГеоГрад"</div>
<div class="c r" style="left:366px;top:466px;width:35px">1</div>
<div class="c " style="left:402px;top:466px;width:212px">Новый</div>
<div class="c " style="left:615px;top:466px;width:340px">Изменение</div>
<div class="c " style="left:956px;top:466px;width:143px">Новый</div>
<div class="c r" style="left:1100px;top:466px;width:32px">1</div>
<div class="c " style="left:1133px;top:466px;width:120px">26.12.2017 10:01:15</div>
<div class="c " style="left:1254px;top:466px;width:59px">192.168.233.12</div>
<div class="ind" style="top:484px"></div>
<div class="c " style="left:62px;top:484px;width:77px">ГеоГрад</div>
<div class="c " style="left:140px;top:484px;width:225px">МКУ "ИКЦ "ГеоГрад"</div>
<div class="c r" style="left:366px;top:484px;width:35px">1</div>
<div class="c " style="left:402px;top:484px;width:212px">Новый</div>
<div class="c " style="left:615px;top:484px;width:340px">Изменение</div>
<div class="c " style="left:956px;top:484px;width:143px">Новый</div>
<div class="c r" style="left:1100px;top:484px;width:32px">1</div>
<div class="c " style="left:1133px;top:484px;width:120px">26.12.2017 10:01:53</div>
<div class="c " style="left:1254px;top:484px;width:59px">192.168.233.12</div>
<div class="ind" style="top:502px"></div>
<div class="c " style="left:62px;top:502px;width:77px">ГеоГрад</div>
<div class="c " style="left:140px;top:502px;width:225px">МКУ "ИКЦ "ГеоГрад"</div>
<div class="c r" style="left:366px;top:502px;width:35px">1</div>
<div class="c " style="left:402px;top:502px;width:212px">Новый</div>
<div class="c " style="left:615px;top:502px;width:340px">Изменение</div>
<div class="c " style="left:956px;top:502px;width:143px">Новый</div>
<div class="c r" style="left:1100px;top:502px;width:32px">1</div>
<div class="c " style="left:1133px;top:502px;width:120px">26.12.2017 10:01:58</div>
<div class="c " style="left:1254px;top:502px;width:59px">192.168.233.12</div>
<div class="ind" style="top:520px"></div>
<div class="c " style="left:62px;top:520px;width:77px">ГеоГрад</div>
<div class="c " style="left:140px;top:520px;width:225px">МКУ "ИКЦ "ГеоГрад"</div>
<div class="c r" style="left:366px;top:520px;width:35px">1</div>
<div class="c " style="left:402px;top:520px;width:212px">Новый</div>
<div class="c " style="left:615px;top:520px;width:340px">Изменение</div>
<div class="c " style="left:956px;top:520px;width:143px">Новый</div>
<div class="c r" style="left:1100px;top:520px;width:32px">1</div>
<div class="c " style="left:1133px;top:520px;width:120px">26.12.2017 10:02:32</div>
<div class="c " style="left:1254px;top:520px;width:59px">192.168.233.12</div>
<div class="ind" style="top:538px"></div>
<div class="c " style="left:62px;top:538px;width:77px">ГеоГрад</div>
<div class="c " style="left:140px;top:538px;width:225px">МКУ "ИКЦ "ГеоГрад"</div>
<div class="c r" style="left:366px;top:538px;width:35px">1</div>
<div class="c " style="left:402px;top:538px;width:212px">Новый</div>
<div class="c " style="left:615px;top:538px;width:340px">Изменение</div>
<div class="c " style="left:956px;top:538px;width:143px">Новый</div>
<div class="c r" style="left:1100px;top:538px;width:32px">1</div>
<div class="c " style="left:1133px;top:538px;width:120px">26.12.2017 10:03:10</div>
<div class="c " style="left:1254px;top:538px;width:59px">192.168.233.12</div>
<div class="ind" style="top:556px"></div>
<div class="c " style="left:62px;top:556px;width:77px">ГеоГрад</div>
<div class="c " style="left:140px;top:556px;width:225px">МКУ "ИКЦ "ГеоГрад"</div>
<div class="c r" style="left:366px;top:556px;width:35px">1</div>
<div class="c " style="left:402px;top:556px;width:212px">Новый</div>
<div class="c " style="left:615px;top:556px;width:340px">Изменение</div>
<div class="c " style="left:956px;top:556px;width:143px">Новый</div>
<div class="c r" style="left:1100px;top:556px;width:32px">1</div>
<div class="c " style="left:1133px;top:556px;width:120px">28.12.2017 10:03:57</div>
<div class="c " style="left:1254px;top:556px;width:59px">192.168.233.12</div>
<div class="ind" style="top:574px"></div>
<div class="c " style="left:62px;top:574px;width:77px">ГеоГрад</div>
<div class="c " style="left:140px;top:574px;width:225px">МКУ "ИКЦ "ГеоГрад"</div>
<div class="c r" style="left:366px;top:574px;width:35px">1</div>
<div class="c " style="left:402px;top:574px;width:212px">Новый</div>
<div class="c " style="left:615px;top:574px;width:340px">Присоединение файла</div>
<div class="c " style="left:956px;top:574px;width:143px">Новый</div>
<div class="c r" style="left:1100px;top:574px;width:32px">1</div>
<div class="c " style="left:1133px;top:574px;width:120px">28.12.2017 10:04:55</div>
<div class="c " style="left:1254px;top:574px;width:59px">192.168.233.12</div>
<div class="ind" style="top:592px"></div>
<div class="c " style="left:62px;top:592px;width:77px">ГеоГрад</div>
<div class="c " style="left:140px;top:592px;width:225px">МКУ "ИКЦ "ГеоГрад"</div>
<div class="c r" style="left:366px;top:592px;width:35px">1</div>
<div class="c " style="left:402px;top:592px;width:212px">Новый</div>
<div class="c " style="left:615px;top:592px;width:340px">Присоединение файла</div>
<div class="c " style="left:956px;top:592px;width:143px">Новый</div>
<div class="c r" style="left:1100px;top:592px;width:32px">1</div>
<div class="c " style="left:1133px;top:592px;width:120px">28.12.2017 10:05:36</div>
<div class="c " style="left:1254px;top:592px;width:59px">192.168.233.12</div>
<div class="ind" style="top:610px"></div>
<div class="c " style="left:62px;top:610px;width:77px">ГеоГрад</div>
<div class="c " style="left:140px;top:610px;width:225px">МКУ "ИКЦ "ГеоГрад"</div>
<div class="c r" style="left:366px;top:610px;width:35px">1</div>
<div class="c " style="left:402px;top:610px;width:212px">Новый</div>
<div class="c " style="left:615px;top:610px;width:340px">Изменение</div>
<div class="c " style="left:956px;top:610px;width:143px">Новый</div>
<div class="c r" style="left:1100px;top:610px;width:32px">1</div>
<div class="c " style="left:1133px;top:610px;width:120px">28.12.2017 10:06:26</div>
<div class="c " style="left:1254px;top:610px;width:59px">192.168.233.12</div>
<div class="ind" style="top:628px"></div>
<div class="c " style="left:62px;top:628px;width:77px">ГеоГрад</div>
<div class="c " style="left:140px;top:628px;width:225px">МКУ "ИКЦ "ГеоГрад"</div>
<div class="c r" style="left:366px;top:628px;width:35px">5</div>
<div class="c " style="left:402px;top:628px;width:212px">Новый</div>
<div class="c " style="left:615px;top:628px;width:340px">Подписать и обработать</div>
<div class="c " style="left:956px;top:628px;width:143px">Экспертиза</div>
<div class="c r" style="left:1100px;top:628px;width:32px">1</div>
<div class="c " style="left:1133px;top:628px;width:120px">28.12.2017 10:06:54</div>
<div class="c " style="left:1254px;top:628px;width:59px">192.168.233.12</div>
<div class="ind" style="top:646px"></div>
<div class="c " style="left:62px;top:646px;width:77px">ГеоГрад</div>
<div class="c " style="left:140px;top:646px;width:225px">МКУ "ИКЦ "ГеоГрад"</div>
<div class="c r" style="left:366px;top:646px;width:35px">19</div>
<div class="c " style="left:402px;top:646px;width:212px">Экспертиза</div>
<div class="c " style="left:615px;top:646px;width:340px">Согласовать</div>
<div class="c " style="left:956px;top:646px;width:143px">Согласован</div>
<div class="c r" style="left:1100px;top:646px;width:32px">5</div>
<div class="c " style="left:1133px;top:646px;width:120px">28.12.2017 10:06:58</div>
<div class="c " style="left:1254px;top:646px;width:59px">192.168.233.12</div>
<div class="ind" style="top:664px"><i></i></div>
<div class="c  sel" style="left:62px;top:664px;width:77px">ГеоГрад</div>
<div class="c " style="left:140px;top:664px;width:225px">МКУ "ИКЦ "ГеоГрад"</div>
<div class="c r" style="left:366px;top:664px;width:35px">49</div>
<div class="c " style="left:402px;top:664px;width:212px">Согласован</div>
<div class="c " style="left:615px;top:664px;width:340px">Отправить сведения в ЕИС</div>
<div class="c " style="left:956px;top:664px;width:143px">Сведения отправлены в ЕИС</div>
<div class="c r" style="left:1100px;top:664px;width:32px">19</div>
<div class="c " style="left:1133px;top:664px;width:120px">28.12.2017 10:07:08</div>
<div class="c " style="left:1254px;top:664px;width:59px">192.168.233.12</div>
<!-- vscroll -->
<div class="chk" style="left:1314px;top:268px;width:16px;height:430px"></div>
<div class="raised sb" style="left:1314px;top:268px;width:16px;height:16px"><i class="au"></i></div>
<div class="raised sb" style="left:1314px;top:475px;width:16px;height:198px"></div>
<div class="raised sb" style="left:1314px;top:682px;width:16px;height:16px"><i class="ad"></i></div>
<!-- hscroll -->
<div class="chk" style="left:50px;top:698px;width:1264px;height:16px"></div>
<div class="raised sb" style="left:50px;top:698px;width:16px;height:16px"><i class="al"></i></div>
<div class="raised sb" style="left:66px;top:698px;width:679px;height:16px"></div>
<div class="raised sb" style="left:1298px;top:698px;width:16px;height:16px"><i class="ar"></i></div>
<div style="left:1314px;top:698px;width:16px;height:16px;background:#D4D0C8"></div>
<svg style="left:1316px;top:700px" width="14" height="14" viewBox="0 0 14 14"><path d="M13 1L1 13M13 5L5 13M13 9L9 13" stroke="#808080" stroke-width="2"/><path d="M13 0L0 13M13 4L4 13M13 8L8 13" stroke="#fff" stroke-width="1"/></svg>

<!-- taskbar -->
<div style="left:0;top:872px;width:1440px;height:28px;background:#D4D0C8;box-shadow:inset 0 1px 0 #D4D0C8,inset 0 2px 0 #fff"></div>
<style>
.tb{top:876px;height:22px;font:11px "DejaVu Sans Condensed","DejaVu Sans","Liberation Sans",sans-serif;line-height:21px}
.tb b{top:1px;line-height:22px}
</style>
<div class="tb raised" style="left:2px;width:51px"><b style="left:19px;font-weight:bold">Пуск</b></div>
<div class="tb raised" style="left:62px;width:159px"><b style="left:23px">{C:\} - Far 3.0.4949 x86</b></div>
<div class="tb raised" style="left:258px;width:160px"><b style="left:23px;letter-spacing:-.1px">Почта Mail.Ru - Mozilla F…</b></div>
<div class="tb raised" style="left:420px;width:160px"><b style="left:23px">Реестр контрактов зак…</b></div>
<div class="tb" style="left:582px;width:160px;background:#fff;box-shadow:inset 1px 1px 0 #404040,inset -1px -1px 0 #fff,inset 2px 2px 0 #808080,inset -2px -2px 0 #D4D0C8"><b style="left:24px;top:2px;font-weight:bold">09.01.2018 Бюджет ...</b></div>
<div class="tb raised" style="left:744px;width:160px"><b style="left:24px">Дело</b></div>
<svg style="left:584px;top:878px" width="20" height="18"><use href="#app"/></svg>
<div class="tb" style="left:1180px;top:877px">RU</div>
<div class="vs" style="left:1201px;top:877px;height:20px"></div>
<div style="left:1204px;top:876px;width:1234px;height:22px;box-shadow:inset 1px 1px 0 #808080,inset -1px -1px 0 #fff"></div>
<div class="tb" style="left:1387px;top:877px">8:53</div>
<svg style="left:0;top:876px" width="1440" height="22" viewBox="0 876 1440 22">
<defs>
<radialGradient id="gFox" cx=".5" cy=".4" r=".6"><stop offset="0" stop-color="#FFD040"/><stop offset=".6" stop-color="#FF7020"/><stop offset="1" stop-color="#E02860"/></radialGradient>
<linearGradient id="gMon" x1="0" y1="0" x2="1" y2="1"><stop offset="0" stop-color="#1848C0"/><stop offset="1" stop-color="#60A8F0"/></linearGradient>
</defs>
<!-- start flag -->
<g transform="translate(6,879)">
<path d="M1 3Q3.500 1 7 2.500L6 8Q3 6.500 0 8Z" fill="#E84820"/>
<path d="M8 3Q11 4.500 14.500 2.500L13.500 8Q10.500 10 7 8.500Z" fill="#68B828"/>
<path d="M0 9.500Q3 8 6 9.500L5 15Q2.500 13.500 -1 15Z" fill="#3888E0"/>
<path d="M7 10Q10 11.500 13 9.500L12 15Q9 17 6 15.500Z" fill="#F8C020"/>
</g>
<!-- far icon -->
<g shape-rendering="crispEdges"><rect x="66" y="880" width="16" height="13" fill="#0000A8"/><rect x="67" y="881" width="6" height="11" fill="none" stroke="#50E0F0"/><rect x="75" y="881" width="6" height="11" fill="none" stroke="#50E0F0"/><path d="M69 883.500H72M69 885.500H72M69 887.500H72M77 883.500H80M77 885.500H80M77 887.500H80" stroke="#50E0F0"/><rect x="66" y="893" width="16" height="2" fill="#000"/></g>
<!-- calculator -->
<rect x="234.500" y="879.500" width="11" height="15" rx="1" fill="#D8E8F8" stroke="#6090C8"/><rect x="236" y="881" width="8" height="4" fill="#A8D0F8" stroke="#6090C8" stroke-width=".5"/><path d="M236.500 887.500H244M236.500 889.500H244M236.500 891.500H244" stroke="#6090C8" stroke-dasharray="2 1"/>
<!-- firefox -->
<circle cx="269.500" cy="887.500" r="7.800" fill="url(#gFox)"/><circle cx="270.500" cy="886.500" r="3.600" fill="#5838B8"/><path d="M262 886Q263 881 268 880Q265 884 268 886Q272 886 272 889Q270 892 266 891Q262 890 262 886Z" fill="#FF9820"/>
<!-- IE -->
<circle cx="432" cy="888" r="6.500" fill="none" stroke="#30A0E8" stroke-width="3"/><path d="M428 887.500H438" stroke="#30A0E8" stroke-width="2.500"/><path d="M436 892H439" stroke="#D4D0C8" stroke-width="3"/><ellipse cx="432.500" cy="886.500" rx="9" ry="3.500" fill="none" stroke="#F0C030" stroke-width="1.300" transform="rotate(-28 432.500 886.500)"/>
<!-- delo -->
<circle cx="755.500" cy="887.500" r="7.500" fill="#182898"/><text x="752" y="891.500" font-family="Liberation Sans,sans-serif" font-size="10" font-weight="bold" font-style="italic" fill="#fff">A</text>
<!-- folder -->
<path d="M914.500 884.500V882H920L921.500 883.500H929.500V894.500H914.500Z" fill="#F8E090" stroke="#D0A830"/><rect x="918" y="887.500" width="9" height="7" fill="#58B0F0" stroke="#2878C8" stroke-width=".8"/><rect x="920.500" y="891.500" width="4" height="3" fill="#D4E8F8"/>
<!-- tray -->
<path d="M1213 883Q1214 880 1219 881Q1226 882 1226.500 888Q1227 893.500 1222 894Q1215 894.500 1213.500 889Q1212 886 1213 883Z" fill="#78C020"/><path d="M1217 887.500L1219 889.500L1222.500 885.500" fill="none" stroke="#fff" stroke-width="1.400"/>
<g transform="translate(1243,887.500)" fill="#50B828" stroke="#308010" stroke-width=".6"><ellipse cx="0" cy="-4.500" rx="2.600" ry="3.300"/><ellipse cx="0" cy="4.500" rx="2.600" ry="3.300"/><ellipse cx="-4.500" cy="0" rx="3.300" ry="2.600"/><ellipse cx="4.500" cy="0" rx="3.300" ry="2.600"/><ellipse cx="0" cy="-4.500" rx="2.600" ry="3.300" transform="rotate(45)"/><ellipse cx="0" cy="-4.500" rx="2.600" ry="3.300" transform="rotate(-45)"/><ellipse cx="0" cy="4.500" rx="2.600" ry="3.300" transform="rotate(45)"/><ellipse cx="0" cy="4.500" rx="2.600" ry="3.300" transform="rotate(-45)"/><circle r="1.800" fill="#F0E020" stroke="none"/></g>
<path d="M1259.500 880V894.500L1266 887.500ZM1266 880H1274L1266 887.500Z" fill="#E01828"/><path d="M1266 887.500L1270 894.500H1262Z" fill="#E01828" opacity=".7"/><rect x="1268" y="888" width="7" height="7" fill="#101010"/><path d="M1270 890L1273.500 893.500M1273.500 890.500V893.500H1270.500" stroke="#fff" stroke-width="1" fill="none"/>
<path d="M1284.500 880.500V895" stroke="#707070" stroke-width="1.400"/><path d="M1285.500 881.500Q1289 879.500 1292 882Q1295 884 1298.500 882.500L1296 889Q1293 890.500 1290.500 888.500Q1288 886.500 1285.500 888Z" fill="#fff" stroke="#808080" stroke-width=".8"/>
<rect x="1311.500" y="882.500" width="11" height="9" fill="#C8C8C8" stroke="#505050"/><rect x="1313" y="884" width="8" height="6" fill="#A0A8A8"/><path d="M1313 894.500H1322M1309.500 880V887M1308 882.500H1311M1309.500 887V894" stroke="#404040"/>
<path d="M1332 885.500H1335L1339.500 880.500V894.500L1335 890H1332Z" fill="#E8E8E8" stroke="#707070" stroke-width=".9"/><circle cx="1343" cy="891" r="4" fill="#E02020"/><path d="M1341.300 889.300L1344.700 892.700M1344.700 889.300L1341.300 892.700" stroke="#fff" stroke-width="1.300"/>
<rect x="1356" y="881.500" width="14" height="13" rx="2" fill="#fff" stroke="#303030" stroke-width="1.200"/><path d="M1359.500 879.500V883M1366.500 879.500V883" stroke="#303030" stroke-width="1.400"/><text x="1360" y="892.500" font-family="Liberation Sans,sans-serif" font-size="9" font-weight="bold" fill="#303030">9</text>
<rect x="1420.500" y="882.500" width="15" height="11" fill="url(#gMon)" stroke="#103090"/><rect x="1423" y="891" width="12" height="2" fill="#102060"/>
</svg>


</body></html>
